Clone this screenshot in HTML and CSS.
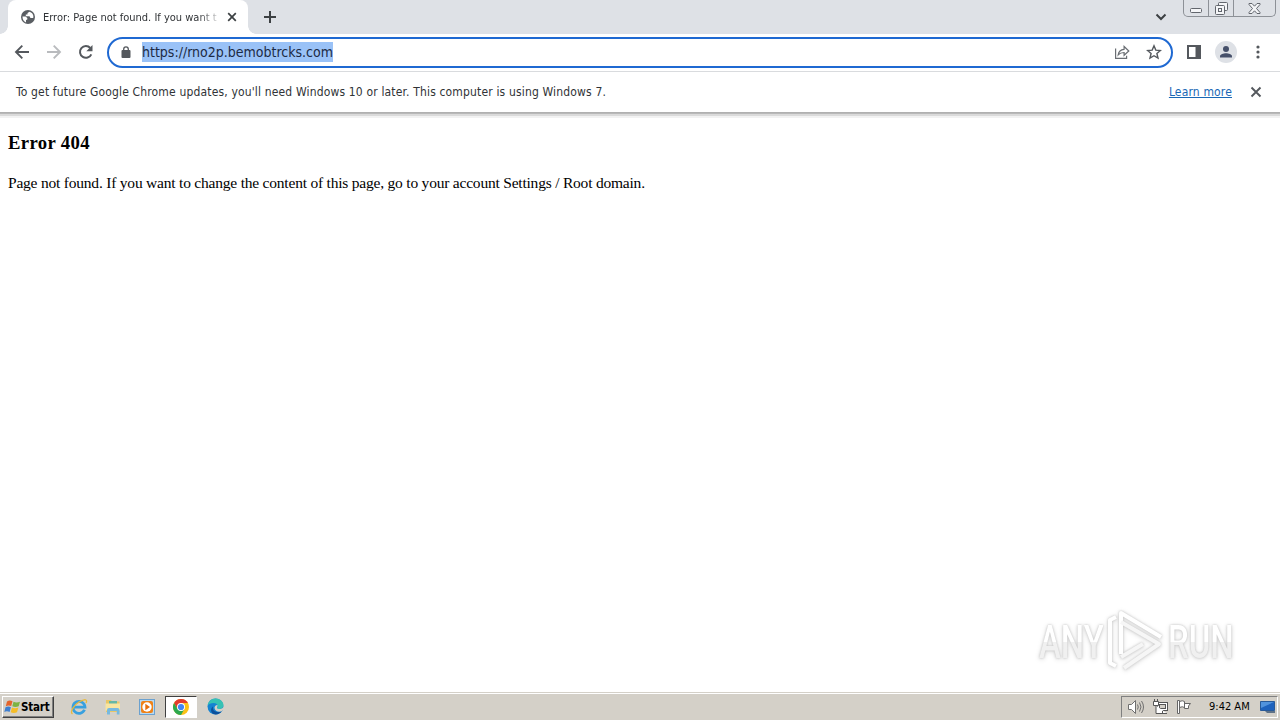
FILE: index.html
```html
<!DOCTYPE html>
<html lang="en">
<head>
  <meta charset="UTF-8" />
  <title>Error: Page not found</title>
  <link rel="stylesheet" href="styles.css">
</head>
<body>
  <div class="tab-strip">
    <div class="tab">
      <svg class="favicon" width="14" height="14" viewBox="0 0 14 14">
        <circle cx="7" cy="7" r="7" fill="#5a5e63"/>
        <path d="M1.500 6.500h3l1.800 1.600v1.500L5 10v2.400C2.800 11.500 1.400 9.500 1.500 6.500zM8.500 1.700L6.500 3v1.500H4.800v1.800h3.700l1 1.700h2.700c.8-2.800-.8-5.500-3.700-6.300z" fill="#fff"/>
      </svg>
      <span class="tab-title">Error: Page not found. If you want t</span>
      <svg class="tab-close" width="10" height="10" viewBox="0 0 10 10"><path d="M1.200 1.200l7.600 7.600M8.800 1.200L1.200 8.800" stroke="#3c4043" stroke-width="1.700"/></svg>
    </div>
    <svg class="new-tab" width="12" height="12" viewBox="0 0 12 12"><path d="M6 0v12M0 6h12" stroke="#3c4043" stroke-width="2"/></svg>
    <svg class="tab-search" width="12" height="8" viewBox="0 0 12 8"><path d="M1.500 1.500L6 6l4.500-4.500" fill="none" stroke="#3c4043" stroke-width="2"/></svg>
    <div class="window-buttons">
      <span class="win-btn min"><svg width="12" height="5" viewBox="0 0 12 5"><rect x=".5" y=".5" width="11" height="4" rx="1" fill="#f4f5f7" stroke="#62666d"/></svg></span>
      <span class="win-btn max"><svg width="13" height="13" viewBox="0 0 13 13" fill="#f4f5f7" stroke="#62666d"><rect x="3.500" y=".5" width="9" height="8" rx="1"/><rect x=".5" y="3.500" width="9" height="9" rx="1"/><rect x="3.500" y="6.500" width="3" height="3"/></svg></span>
      <span class="win-btn close"><svg width="13" height="11" viewBox="0 0 13 11"><path d="M1 .5h3l2.500 2.700L9 .5h3v1L8.500 5.500 12 9.500v1H9L6.500 7.800 4 10.500H1v-1l3.500-4L1 1.500z" fill="#f4f5f7" stroke="#62666d"/></svg></span>
    </div>
  </div>

  <div class="toolbar">
    <svg class="nav" width="16" height="16" viewBox="0 0 16 16"><path d="M15 8H2.500M8.300 1.700L2 8l6.300 6.300" fill="none" stroke="#54585d" stroke-width="1.900"/></svg>
    <svg class="nav" width="16" height="16" viewBox="0 0 16 16"><path d="M1 8h12.500M7.700 1.700L14 8l-6.300 6.300" fill="none" stroke="#b9bbbe" stroke-width="1.900"/></svg>
    <svg class="nav" width="16" height="16" viewBox="0 0 16 16"><path d="M13.300 10.300A5.900 5.900 0 1 1 12.300 4" fill="none" stroke="#54585d" stroke-width="2"/><path d="M14.500 1v6.200H8.300z" fill="#54585d"/></svg>
    <div class="omnibox">
      <svg class="lock" width="10" height="12" viewBox="0 0 10 12"><rect x=".5" y="4" width="9" height="8" rx="1" fill="#54585d"/><path d="M2.700 4.500V3.200a2.300 2.300 0 0 1 4.600 0v1.300" fill="none" stroke="#54585d" stroke-width="1.300"/></svg>
      <span class="url">https://rno2p.bemobtrcks.com</span>
      <svg class="share" width="16" height="14" viewBox="0 0 16 14" fill="none" stroke="#6a6e73" stroke-width="1.200"><path d="M1.600 3.500v9.900h11v-2.700"/><path d="M4.200 9.800c.5-3.700 2.700-5.300 5.900-5.500V1.500L14.800 6l-4.700 4.300V7.500c-2.600 0-4.300.5-5.900 2.300z"/></svg>
      <svg class="star" width="16" height="16" viewBox="0 0 16 16"><path d="M8 1.800l1.800 4.300 4.600.4-3.500 3 1.100 4.600L8 11.700l-4 2.400 1.100-4.600-3.500-3 4.600-.4z" fill="none" stroke="#54585d" stroke-width="1.400"/></svg>
    </div>
    <svg class="side-panel" width="14" height="14" viewBox="0 0 14 14"><rect x="1" y="1" width="12" height="12" fill="#fff" stroke="#54585d" stroke-width="2"/><path d="M8.500 1H13v12H8.500z" fill="#54585d"/></svg>
    <svg class="avatar" width="22" height="22" viewBox="0 0 22 22"><circle cx="11" cy="11" r="11" fill="#dee1e6"/><circle cx="11" cy="8" r="3" fill="#46506a"/><path d="M5 16.500v-1.300c0-2 3.500-3 6-3s6 1 6 3v1.300z" fill="#46506a"/></svg>
    <svg class="menu" width="4" height="14" viewBox="0 0 4 14" fill="#54585d"><circle cx="2" cy="2" r="1.600"/><circle cx="2" cy="7" r="1.600"/><circle cx="2" cy="12" r="1.600"/></svg>
  </div>

  <div class="infobar">
    <span class="info-text">To get future Google Chrome updates, you'll need Windows 10 or later. This computer is using Windows 7.</span>
    <a class="learn-more">Learn more</a>
    <svg width="12" height="12" viewBox="0 0 12 12"><path d="M1.500 1.500l9 9M10.500 1.500l-9 9" stroke="#54585d" stroke-width="1.900"/></svg>
  </div>

  <main class="page">
    <h3>Error 404</h3>
    <p>Page not found. If you want to change the content of this page, go to your account Settings / Root domain.</p>
    <div class="watermark">
      <span class="any">ANY</span>
      <svg width="60" height="64" viewBox="0 0 60 64" fill="none" stroke="#fff" stroke-width="4" stroke-linejoin="round">
        <path d="M12 8l-6 3v43l6 3"/>
        <path d="M17 45V4l40 24"/>
        <path d="M17 13l38 22-35 24" stroke="#f6f6f6"/>
        <path d="M17 48l22-13" stroke="#f6f6f6"/>
      </svg>
      <span class="run">RUN</span>
    </div>
  </main>

  <footer class="taskbar">
    <div class="start">
      <svg width="17" height="16" viewBox="0 0 17 16">
        <path d="M3 2.500c2-1.300 3.800-1.100 5.500-.2L7.200 7C5.500 6.200 3.700 6.200 1.800 7.200z" fill="#e5642b"/>
        <path d="M9.500 2.700c2 1.100 4 1.100 6.500 0L14.700 7.300c-2.300 1-4.300 1-6.400 0z" fill="#7cb342"/>
        <path d="M1.500 8.300c2-1.100 3.700-1 5.400-.1L5.600 13C4 12.100 2 12 .3 13z" fill="#3f7fd0"/>
        <path d="M8 8.500c2 1 4 1 6.400 0L13 13.200c-2.300 1-4.300.9-6.300 0z" fill="#f5bd27"/>
      </svg>
      <span>Start</span>
    </div>
    <div class="launcher">
      <span class="task">
        <svg width="18" height="18" viewBox="0 0 18 18" fill="none"><path d="M14.500 11.800A6 6 0 1 1 15 9.200H4" stroke="#38a0df" stroke-width="2.800"/><path d="M2.500 16c-3-2 1.500-9 6.500-12 4-2.500 7.500-3 7.600-1 0 .7-.2 1.300-.6 2" stroke="#e8b93c" stroke-width="1.300"/></svg>
      </span>
      <span class="task">
        <svg width="18" height="18" viewBox="0 0 18 18"><path d="M2 2h5l1 1.500h7.500V14H2z" fill="#e9c766"/><path d="M5 3h8v3H5z" fill="#65b7a4"/><path d="M1.500 5.500h14.500v7H1.500z" fill="#f8e5a0"/><path d="M3 16.500V12q0-2 2-2h8.500q2 0 2 2v4.500h-2.700V13H6v3.500z" fill="#77b9df"/></svg>
      </span>
      <span class="task">
        <svg width="18" height="18" viewBox="0 0 18 18"><rect x="1.500" y="1.500" width="15" height="15" fill="#b8daf2" stroke="#6ba1cf"/><rect x="3" y="3" width="12" height="12" rx="2" fill="#ef8218"/><circle cx="9" cy="9" r="4.700" fill="#fff"/><path d="M7.300 5.800v6.400L12 9z" fill="#e66f0c"/></svg>
      </span>
      <span class="task active">
        <svg width="16" height="16" viewBox="0 0 16 16"><circle cx="8" cy="8" r="8" fill="#fbc116"/><path d="M1.070 4A8 8 0 0 1 14.930 4H8L4.540 10z" fill="#e33b2e"/><path d="M1.070 4A8 8 0 0 0 8 16l3.460-6H4.540z" fill="#2da94f"/><circle cx="8" cy="8" r="4" fill="#fff"/><circle cx="8" cy="8" r="3.100" fill="#4285f4"/></svg>
      </span>
      <span class="task">
        <svg width="17" height="17" viewBox="0 0 17 17"><circle cx="8.500" cy="8.500" r="8" fill="#1583d1"/><path d="M.6 7.500C1.200 3.300 4.600.5 8.500.5c4.800 0 8 3.500 8 6.600 0 2.400-1.700 3.900-3.700 3.900-1.600 0-2.800-.5-2.800-1.100 0-.5.600-.7.600-1.900C10.600 6.300 8.800 5 6.500 5 3.800 5 1.600 6 .6 7.500z" fill="#36c2b4"/><path d="M6 8.500c-1 4 3 7 8.800 4.800C13 16 9.500 17 6.500 16 3.500 14.500 3.300 10.500 6 8.500z" fill="#0d509b"/><path d="M10.400 7c.5 1.500-.6 2-.4 3 .3.800 2 1.200 3.500 1 1.800-.2 3-1.500 3-3.200l.5 3-2.200 2.500c-3.500 1-7-.3-7.300-3.300C7.400 8.500 8.500 7 10.400 7z" fill="#d4d0c8"/></svg>
      </span>
    </div>
    <div class="tray">
      <svg width="18" height="16" viewBox="0 0 18 16" fill="none" stroke="#6f6f6f"><path d="M1.500 5.500h3l4-4v13l-4-4h-3z" fill="#fff"/><path d="M10.500 5.500q1.500 2.500 0 5M12.500 3.500q3 4.500 0 9M14.500 2q4 6 0 12"/></svg>
      <svg width="17" height="16" viewBox="0 0 17 16" fill="#fff" stroke="#555"><rect x="5.500" y="3.500" width="10" height="8"/><rect x="7.500" y="5.500" width="6" height="4" fill="#d4d0c8"/><path d="M1.500 2.500h5v4h-5zM4 6.500v8h11M7.500 14.500h6M2.500 0v2M5.500 0v2M10.500 12v2"/></svg>
      <svg width="17" height="16" viewBox="0 0 17 16" fill="#fff" stroke="#666"><path d="M3.500 2.500q3-1.500 5 0v6q-2-1.500-5 0zM8.500 4.500h6l-2 2.500v2.500h-4z"/><path d="M1.500 1.500h2v13h-2z"/></svg>
      <span class="clock">9:42 AM</span>
      <svg width="16" height="14" viewBox="0 0 16 14"><path d="M.5 1.500h14v9H.5z" fill="#1e62bd" stroke="#285a99"/><path d="M1 2h13L1 8z" fill="#5193dd"/><path d="M5 11h10v2H7z" fill="#5f7287"/></svg>
    </div>
  </footer>
</body>
</html>
```
FILE: styles.css
```css
* {
  box-sizing: border-box;
}

body {
  margin: 0;
  height: 720px;
  display: flex;
  flex-direction: column;
  overflow: hidden;
  background: #fff;
  font-family: "DejaVu Sans Condensed", "DejaVu Sans", sans-serif;
  font-size: 12px;
  color: #303336;
}

svg {
  display: block;
  flex: none;
}

/* tabs */
.tab-strip {
  height: 34px;
  flex: none;
  display: flex;
  align-items: flex-start;
  padding-left: 8px;
  background: #dee1e6;
}

.tab {
  position: relative;
  width: 240px;
  height: 34px;
  display: flex;
  align-items: center;
  padding: 0 11px 0 13px;
  background: #fff;
  border-radius: 8px 8px 0 0;
}

.tab::before,
.tab::after {
  content: "";
  position: absolute;
  bottom: 0;
  width: 8px;
  height: 8px;
}

.tab::before {
  left: -8px;
  background: radial-gradient(circle at 0 0, transparent 7.5px, #fff 8px);
}

.tab::after {
  right: -8px;
  background: radial-gradient(circle at 100% 0, transparent 7.5px, #fff 8px);
}

.tab-title {
  width: 176px;
  margin-left: 8px;
  margin-right: 8px;
  white-space: nowrap;
  font-size: 11px;
  -webkit-mask-image: linear-gradient(to right, #000 155px, transparent 180px);
  mask-image: linear-gradient(to right, #000 155px, transparent 180px);
}

.new-tab {
  margin: 11px 0 0 16px;
}

.tab-search {
  margin: 13px 16px 0 auto;
}

.window-buttons {
  display: flex;
  width: 93px;
  height: 17px;
  margin-right: 4px;
  border: 1px solid #8d9197;
  border-top: none;
  border-radius: 0 0 5px 5px;
}

.win-btn {
  display: flex;
  justify-content: center;
  border-right: 1px solid #8d9197;
}

.min {
  width: 25px;
  padding-top: 8px;
}

.max {
  width: 25px;
  padding-top: 2px;
}

.close {
  flex: 1;
  padding-top: 3px;
  border-right: none;
}

/* toolbar */
.toolbar {
  height: 38px;
  flex: none;
  display: flex;
  align-items: center;
  padding-left: 14px;
  padding-bottom: 1px;
  border-bottom: 1px solid #d9dbde;
}

.nav {
  margin-right: 16px;
}

.omnibox {
  width: 1066px;
  height: 31px;
  margin-left: -3px;
  display: flex;
  align-items: center;
  padding: 0 9px 0 12px;
  border: 2px solid #1f69d2;
  border-radius: 16px;
}

.url {
  margin-left: 11px;
  height: 20px;
  line-height: 21px;
  font-size: 14px;
  background: #9ac2f7;
  color: #1c2a44;
}

.share {
  margin-left: auto;
  margin-right: 16px;
}

.side-panel {
  margin-left: 14px;
}

.avatar {
  margin-left: 14px;
}

.menu {
  margin-left: 19px;
}

/* update notice */
.infobar {
  height: 40px;
  flex: none;
  display: flex;
  align-items: center;
  padding: 0 18px 0 16px;
}

.info-text {
  white-space: nowrap;
  letter-spacing: .16px;
}

.learn-more {
  margin-left: auto;
  margin-right: 18px;
  letter-spacing: .16px;
  color: #1967b5;
  text-decoration: underline;
}

/* page */
.page {
  position: relative;
  flex: 1;
  padding: 20px 8px 0;
  background: linear-gradient(#b0b0b0 0 1px, #b8b8b8 1px 2px, #dadada 2px 4px, #f2f2f2 4px 6px, #fff 6px);
  font-family: "Liberation Serif", serif;
  font-size: 15.5px;
  color: #000;
}

h3 {
  margin: 0 0 21px;
  font-size: 18.72px;
  line-height: 21px;
  letter-spacing: .35px;
}

p {
  margin: 0;
  line-height: 18px;
  letter-spacing: -.21px;
  white-space: nowrap;
}

.watermark {
  position: absolute;
  left: 1039px;
  top: 497px;
  width: 200px;
  height: 64px;
  display: flex;
  align-items: center;
  font-family: Roboto, sans-serif;
  font-size: 47px;
  font-weight: 500;
  color: #fff;
  filter: drop-shadow(0 0 1px #c4c4c4) drop-shadow(0 1px 2px #ddd);
}

.watermark span {
  flex: none;
  width: 66px;
  transform: scaleX(.7);
  transform-origin: left;
  background: linear-gradient(#fff 50%, #f0f0f0 50%);
  -webkit-background-clip: text;
  background-clip: text;
  color: transparent;
}

.watermark .any,
.watermark .run {
  width: 92px;
  margin-right: -27px;
}

.watermark .run {
  margin-left: 4px;
}

/* taskbar */
.taskbar {
  height: 28px;
  flex: none;
  display: flex;
  align-items: center;
  padding: 1px 2px 1px;
  background: #d4d0c8;
  border-top: 1px solid #d4d0c8;
  box-shadow: inset 0 1px #fff;
  color: #000;
}

.start {
  width: 52px;
  height: 22px;
  display: flex;
  align-items: center;
  padding-left: 1px;
  font-size: 11.500px;
  letter-spacing: -.2px;
  font-weight: bold;
  border: 1px solid;
  border-color: #fff #404040 #404040 #fff;
  box-shadow: inset -1px -1px #808080;
}

.launcher {
  display: flex;
  margin-left: 9px;
  gap: 2px;
}

.task {
  width: 32px;
  height: 22px;
  display: flex;
  align-items: center;
  justify-content: center;
}

.active {
  background: #fff;
  border: 1px solid;
  border-color: #404040 #fff #fff #404040;
}

.tray {
  width: 157px;
  height: 22px;
  margin-left: auto;
  display: flex;
  align-items: center;
  gap: 7px;
  padding-left: 5px;
  border: 1px solid;
  border-color: #808080 #fff #fff #808080;
}

.clock {
  width: 42px;
  margin-left: 9px;
  margin-right: 2px;
  font-size: 11px;
  white-space: nowrap;
}
```
